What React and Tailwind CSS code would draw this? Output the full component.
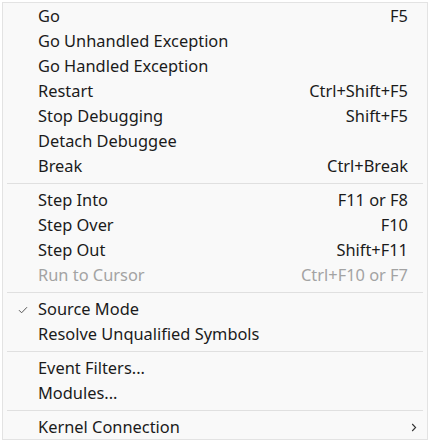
import { Fragment } from 'react'

const groups = [
  [
    { label: 'Go', keys: 'F5' },
    { label: 'Go Unhandled Exception' },
    { label: 'Go Handled Exception' },
    { label: 'Restart', keys: 'Ctrl+Shift+F5' },
    { label: 'Stop Debugging', keys: 'Shift+F5' },
    { label: 'Detach Debuggee' },
    { label: 'Break', keys: 'Ctrl+Break' },
  ],
  [
    { label: 'Step Into', keys: 'F11 or F8' },
    { label: 'Step Over', keys: 'F10' },
    { label: 'Step Out', keys: 'Shift+F11' },
    { label: 'Run to Cursor', keys: 'Ctrl+F10 or F7', disabled: true },
  ],
  [
    { label: 'Source Mode', checked: true },
    { label: 'Resolve Unqualified Symbols' },
  ],
  [{ label: 'Event Filters...' }, { label: 'Modules...' }],
  [{ label: 'Kernel Connection', submenu: true }],
]

const Check = () => (
  <svg width="10" height="8" viewBox="0 0 10 8" fill="none">
    <path d="M1 4.2 L3.6 6.8 L9 1.2" stroke="#555" strokeWidth="1" />
  </svg>
)

const Chevron = () => (
  <svg width="6" height="9" viewBox="0 0 6 9" fill="none">
    <path d="M1.2 1 L4.6 4.5 L1.2 8" stroke="#333" strokeWidth="1.1" />
  </svg>
)

function Item({ item }) {
  const color = item.disabled ? 'text-[#a3a3a3]' : 'text-[#1b1b1b]'
  return (
    <div className={`flex h-[25px] items-center ${color}`}>
      <div className="flex w-[31px] justify-center">
        {item.checked && <Check />}
      </div>
      <div className="flex-1 whitespace-nowrap">{item.label}</div>
      {item.keys && <div className="pr-[15px] whitespace-nowrap">{item.keys}</div>}
      {item.submenu && (
        <div className="flex w-[18px] justify-center">
          <Chevron />
        </div>
      )}
    </div>
  )
}

export default function App() {
  return (
    <div className="h-[442px] w-[432px] bg-white p-[2px] font-['Noto_Sans',sans-serif] text-[16.4px] leading-none">
      <div className="h-full w-[426px] border border-[#e3e3e3] bg-[#f9f9f9] px-[4px] pt-[1px]">
        {groups.map((g, i) => (
          <Fragment key={i}>
            {i > 0 && <div className="my-[4px] h-px bg-[#e0e0e0]" />}
            {g.map((item) => (
              <Item key={item.label} item={item} />
            ))}
          </Fragment>
        ))}
      </div>
    </div>
  )
}
